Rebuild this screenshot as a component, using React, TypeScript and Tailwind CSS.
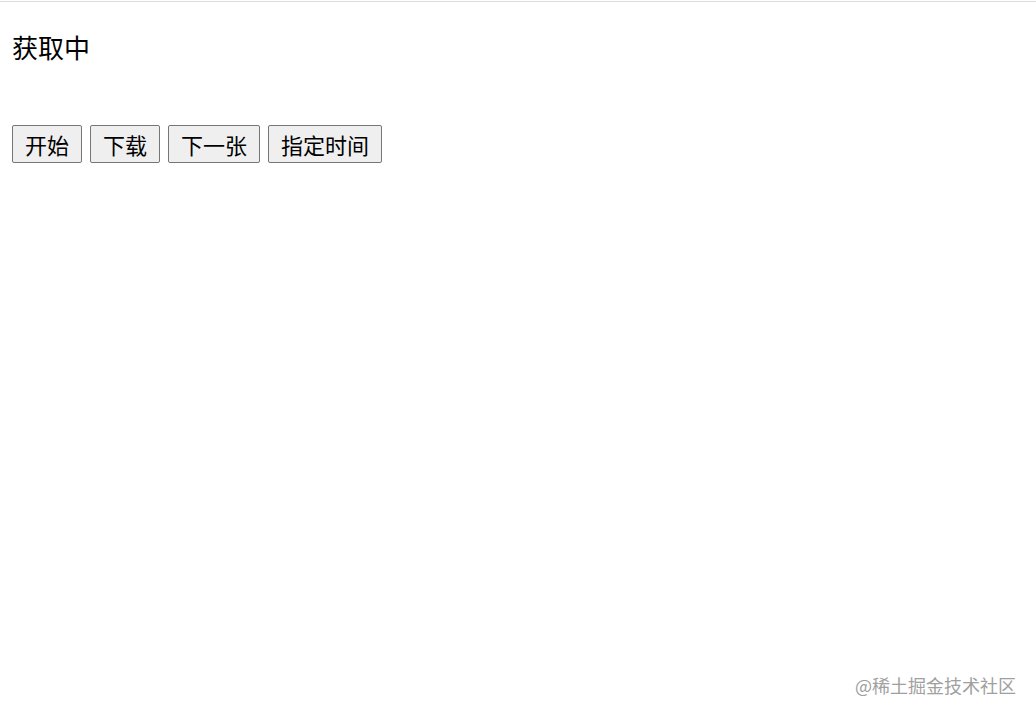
import React from "react";

const font = '"Noto Sans CJK SC", "Microsoft YaHei", sans-serif';

function Btn({ children }: { children: React.ReactNode }) {
  return (
    <button
      className="h-[38px] px-[12px] border border-[#767676] rounded-[2px] bg-[#efefef] text-[22px] leading-[36px] text-black"
      style={{ fontFamily: font }}
    >
      {children}
    </button>
  );
}

export default function App() {
  return (
    <div className="relative w-[1036px] h-[715px] bg-white overflow-hidden" style={{ fontFamily: font }}>
      <div className="h-px bg-white" />
      <div className="h-px bg-[#dcdcdc]" />
      <div className="pl-[12px]">
        <div className="mt-[27px] text-[26px] leading-[36px] text-black">获取中</div>
        <div className="mt-[60px] flex gap-[8px]">
          <Btn>开始</Btn>
          <Btn>下载</Btn>
          <Btn>下一张</Btn>
          <Btn>指定时间</Btn>
        </div>
      </div>
      <div className="absolute right-[20px] bottom-[19px] text-[18px] leading-[22px] text-[#a0a0a0]">
        @稀土掘金技术社区
      </div>
    </div>
  );
}
